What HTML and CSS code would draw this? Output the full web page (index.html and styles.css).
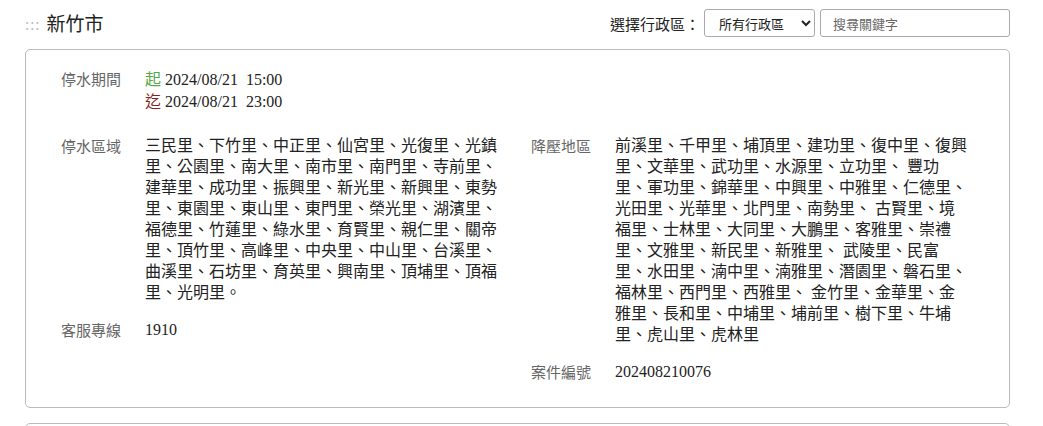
FILE: index.html
```html
<!DOCTYPE html>
<html lang="zh-Hant">
<head>
<meta charset="utf-8">
<title>停水資訊 - 新竹市</title>
<link rel="stylesheet" href="styles.css">
</head>
<body>

<div class="page">
	<div class="topbar">
		<h2 class="city"><span class="dots">:::</span>新竹市</h2>
		<div class="filter">
			<label for="area">選擇行政區：</label>
			<select id="area" class="area">
				<option>所有行政區</option>
				<option>東區</option>
				<option>北區</option>
				<option>香山區</option>
			</select>
			<input type="text" class="keyword" placeholder="搜尋關鍵字">
		</div>
	</div>

	<div class="case">
		<dl class="item full">
			<dt>停水期間</dt>
			<dd>
				<span class="start">起</span> 2024/08/21&nbsp; 15:00<br>
				<span class="end">迄</span> 2024/08/21&nbsp; 23:00
			</dd>
		</dl>

		<div class="col">
			<dl class="item">
				<dt>停水區域</dt>
				<dd>三民里、下竹里、中正里、仙宮里、光復里、光鎮里、公園里、南大里、南市里、南門里、寺前里、建華里、成功里、振興里、新光里、新興里、東勢里、東園里、東山里、東門里、榮光里、湖濱里、福德里、竹蓮里、綠水里、育賢里、親仁里、關帝里、頂竹里、高峰里、中央里、中山里、台溪里、曲溪里、石坊里、育英里、興南里、頂埔里、頂福里、光明里。</dd>
			</dl>
			<dl class="item">
				<dt>客服專線</dt>
				<dd>1910</dd>
			</dl>
		</div>

		<div class="col">
			<dl class="item">
				<dt>降壓地區</dt>
				<dd>前溪里、千甲里、埔頂里、建功里、復中里、復興里、文華里、武功里、水源里、立功里、 豐功里、軍功里、錦華里、中興里、中雅里、仁德里、光田里、光華里、北門里、南勢里、 古賢里、境福里、士林里、大同里、大鵬里、客雅里、崇禮里、文雅里、新民里、新雅里、 武陵里、民富里、水田里、湳中里、湳雅里、潛園里、磐石里、福林里、西門里、西雅里、 金竹里、金華里、金雅里、長和里、中埔里、埔前里、樹下里、牛埔里、虎山里、虎林里</dd>
			</dl>
			<dl class="item">
				<dt>案件編號</dt>
				<dd>202408210076</dd>
			</dl>
		</div>
	</div>

	<div class="case"></div>
</div>

</body>
</html>
```

FILE: styles.css
```css
body {
	margin: 0;
	background: #ffffff;
	color: #222222;
	font-family: "Noto Sans CJK TC", sans-serif;
}
.page {
	padding: 0 33px 0 25px;
}
.topbar {
	display: flex;
	justify-content: space-between;
	align-items: center;
	height: 49px;
}
.city {
	margin: 0;
	font-size: 19px;
	font-weight: normal;
	line-height: 26px;
	color: #222222;
	padding-bottom: 2px;
}
.dots {
	color: #c0c0c0;
	font-size: 15px;
	letter-spacing: 1px;
	margin-right: 6px;
	position: relative;
	top: -1px;
}
.filter {
	display: flex;
	align-items: center;
	gap: 5px;
	padding-bottom: 3px;
}
.filter label {
	font-size: 15px;
	color: #222222;
	margin-right: -1px;
}
.area {
	width: 111px;
	height: 28px;
	border: 1px solid #aaaaaa;
	border-radius: 3px;
	background: #ffffff;
	font-family: "Noto Sans CJK TC", sans-serif;
	font-size: 13px;
	color: #222222;
	padding: 0 6px 0 10px;
}
.keyword {
	width: 190px;
	height: 28px;
	box-sizing: border-box;
	border: 1px solid #aaaaaa;
	border-radius: 3px;
	font-family: "Noto Sans CJK TC", sans-serif;
	font-size: 13px;
	padding: 0 12px;
}
.keyword::placeholder {
	color: #666666;
}

.case {
	border: 1px solid #bbbbbb;
	border-radius: 5px;
	display: grid;
	grid-template-columns: 470px 1fr;
	padding: 18px 20px 9px 35px;
	margin-bottom: 15px;
	min-height: 60px;
}
.item {
	display: flex;
	margin: 0 0 16px 0;
	line-height: 21px;
}
.item.full {
	grid-column: 1 / 3;
	margin-bottom: 23px;
}
.item dt {
	width: 84px;
	flex: none;
	font-size: 15px;
	color: #666666;
}
.item dd {
	margin: 0;
	width: 354px;
	font-family: "Liberation Serif", "Noto Sans CJK TC", serif;
	font-size: 16px;
	color: #222222;
}
.start {
	color: #55aa44;
	font-family: "Noto Sans CJK TC", sans-serif;
}
.end {
	color: #882222;
	font-family: "Noto Sans CJK TC", sans-serif;
}
```
